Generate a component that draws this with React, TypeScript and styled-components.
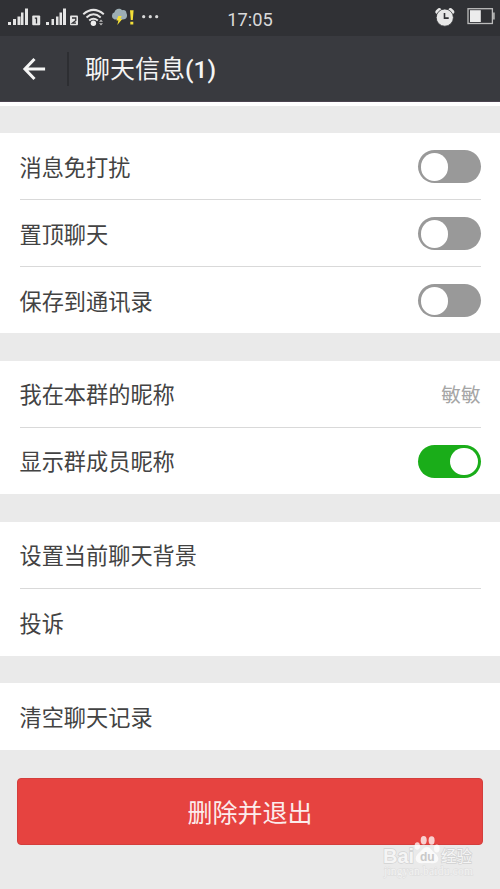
import React from "react";
import styled, { createGlobalStyle } from "styled-components";

const Global = createGlobalStyle`
  * { box-sizing: border-box; }
  body { margin: 0; background: #eaeaea; font-family: Roboto, "Noto Sans CJK SC", sans-serif; }
`;

const Screen = styled.main`
  position: relative;
  width: 500px;
  height: 889px;
  overflow: hidden;
  background: #eaeaea;
`;

const StatusBar = styled.div`
  height: 36px;
  display: grid;
  grid-template-columns: 200px 100px 200px;
  background: #303135;
  svg { display: block; }
`;

const Clock = styled.span`
  color: #d9d9da;
  text-align: center;
  font-size: 18.3px;
  line-height: 39px;
`;

const TitleBar = styled.header`
  height: 66px;
  display: flex;
  align-items: center;
  background: #393a3f;
  border-bottom: 1px solid #4b4450;
`;

const BackButton = styled.button`
  width: 67px;
  height: 65px;
  padding: 0 0 0 21px;
  border: 0;
  background: none;
  svg { display: block; }
`;

const Separator = styled.span`
  width: 2px;
  height: 34px;
  background: #2d2e32;
`;

const Title = styled.h1`
  margin: 3px 0 0 16px;
  font-size: 25px;
  line-height: 36px;
  font-weight: 400;
  color: #f4f4f4;
`;

const Count = styled.span`
  font-size: 24.5px;
  font-weight: 500;
`;

const TopStrip = styled.div`
  height: 4px;
  background: #fff;
`;

const Group = styled.section<{ $height: number }>`
  height: ${(p) => p.$height}px;
  margin-top: 27.5px;
  padding: 0 19.5px;
  background: #fff;
  display: flex;
  flex-direction: column;
  &:first-of-type { margin-top: 27px; }
`;

const Row = styled.div`
  flex: 1;
  min-height: 0;
  display: flex;
  align-items: center;
  justify-content: space-between;
  & + & { border-top: 1px solid #d9d9d9; }
`;

const Label = styled.span`
  padding-top: 3px;
  font-size: 22.2px;
  line-height: 34px;
  color: #434343;
`;

const Value = styled.span`
  padding-top: 4px;
  font-size: 19.6px;
  line-height: 30px;
  color: #a5a5a5;
`;

const Toggle = styled.span<{ $on?: boolean }>`
  display: flex;
  justify-content: ${(p) => (p.$on ? "flex-end" : "flex-start")};
  width: 63px;
  height: 33px;
  margin-top: 1px;
  padding: 3px;
  border-radius: 17px;
  background: ${(p) => (p.$on ? "#1aad19" : "#999")};
`;

const Knob = styled.span`
  width: 27.5px;
  height: 27.5px;
  border-radius: 50%;
  background: #fff;
`;

const DeleteButton = styled.button`
  display: block;
  width: 466px;
  height: 67px;
  margin: 28px 0 0 17px;
  padding: 0 0 1px;
  border: 1px solid #d43e3c;
  border-radius: 4px;
  background: #e64340;
  color: #fcecec;
  font-family: inherit;
  font-size: 25px;
`;

const Watermark = styled.svg`
  position: absolute;
  left: 378px;
  top: 830px;
`;

function Toggler({ on }: { on?: boolean }) {
  return (
    <Toggle $on={on} role="switch" aria-checked={!!on}>
      <Knob />
    </Toggle>
  );
}

function Signals() {
  return (
    <svg width="200" height="36" viewBox="0 0 200 36">
      <g fill="#e4e4e4">
        <path d="M8 22h3v3H8zM13 19h3v6h-3zM17.5 16.5h3V25h-3zM21 12.5h2.5V25H21zM25 8.5h3V25h-3z" />
        <path d="M46 22h3v3h-3zM51.5 19h2.5v6h-2.5zM56 16.5h2.5V25H56zM59.5 12.5H62V25h-2.5zM63 8.5h3V25h-3z" />
        <rect x="32.2" y="15.5" width="8" height="9.8" rx="1" />
        <rect x="70" y="15.5" width="8" height="9.8" rx="1" />
      </g>
      <path d="M34.8 18.2h1.7v5.2M72 18h3.8v2.4l-3.4 2.7H76" fill="none" stroke="#303135" strokeWidth="1.3" />
      <g fill="none" stroke="#e4e4e4" strokeWidth="2">
        <path d="M83.3 14.2Q93.5 5.5 103.8 14.2" />
        <path d="M86.5 17.4Q93.5 11.2 100.7 17.4" />
        <path d="M89.2 20.5Q93.5 17 97.8 20.5" />
      </g>
      <circle cx="93.4" cy="23.2" r="2.7" fill="#eee" />
      <path d="M99 21.8l2-2.2 2 2.2zM99 23.2l2 2.2 2-2.2z" fill="#bbb" />
      <path d="M114.5 19.5a3.8 3.8 0 0 1 0-7.2c.5-3.5 5.2-4.8 7.6-2.1 2.2-.8 4.4.7 4.3 2.8 1.8 3.7-.4 6.5-3.4 6.5z" fill="#9caeb5" />
      <path d="M118.3 16h3.4l-1.4 3h2l-5 6 1.1-4.6h-2z" fill="#f4df38" />
      <path d="M130 10.3h3.6l-.8 9.7h-2zM130.3 21.7h3v2.7h-3z" fill="#f4df38" />
      <g fill="#d8d8d8">
        <circle cx="143.7" cy="16.7" r="1.6" />
        <circle cx="150.3" cy="16.7" r="1.6" />
        <circle cx="156.7" cy="16.7" r="1.6" />
      </g>
    </svg>
  );
}

function AlarmAndBattery() {
  return (
    <svg width="200" height="36" viewBox="300 0 200 36">
      <g fill="#e7e7e7">
        <ellipse cx="438.3" cy="11" rx="3.4" ry="2.1" transform="rotate(-42 438.3 11)" />
        <ellipse cx="451.4" cy="11" rx="3.4" ry="2.1" transform="rotate(42 451.4 11)" />
        <circle cx="444.8" cy="17.6" r="8.6" stroke="#303135" strokeWidth="0.8" />
      </g>
      <path d="M444.5 13v5.1h4.2" fill="none" stroke="#303135" strokeWidth="1.6" />
      <rect x="468" y="8.7" width="24.4" height="14.8" fill="#303135" stroke="#bcbcbc" strokeWidth="1.3" />
      <rect x="470" y="10.2" width="10.8" height="11.8" fill="#ececec" />
      <path d="M493 12.5h1.8v7H493z" fill="#aaa" />
    </svg>
  );
}

export default function App() {
  return (
    <>
      <Global />
      <Screen>
        <StatusBar>
          <Signals />
          <Clock>17:05</Clock>
          <AlarmAndBattery />
        </StatusBar>
        <TitleBar>
          <BackButton aria-label="返回">
            <svg width="26" height="24" viewBox="0 0 26 24">
              <path d="M13.5 2 3.9 12l9.6 10M3.5 12h20.6" fill="none" stroke="#f5f5f5" strokeWidth="3" />
            </svg>
          </BackButton>
          <Separator />
          <Title>聊天信息<Count>(1)</Count></Title>
        </TitleBar>
        <TopStrip />
        <Group $height={200}>
          <Row><Label>消息免打扰</Label><Toggler /></Row>
          <Row><Label>置顶聊天</Label><Toggler /></Row>
          <Row><Label>保存到通讯录</Label><Toggler /></Row>
        </Group>
        <Group $height={133.5}>
          <Row><Label>我在本群的昵称</Label><Value>敏敏</Value></Row>
          <Row><Label>显示群成员昵称</Label><Toggler on /></Row>
        </Group>
        <Group $height={134}>
          <Row><Label>设置当前聊天背景</Label></Row>
          <Row><Label>投诉</Label></Row>
        </Group>
        <Group $height={66.5}>
          <Row><Label>清空聊天记录</Label></Row>
        </Group>
        <DeleteButton>删除并退出</DeleteButton>
        <Watermark width="110" height="54" viewBox="378 830 110 54">
          <g fill="#f5f5f5" stroke="#d2d2d2" strokeWidth="1.3" paintOrder="stroke">
            <text x="383" y="863" fontFamily="Liberation Sans, sans-serif" fontWeight="700" fontSize="20" textLength="31" lengthAdjust="spacingAndGlyphs">Bai</text>
            <text x="441" y="862" fontFamily="Noto Sans CJK SC, sans-serif" fontWeight="400" fontSize="15.5">经验</text>
          </g>
          <g fill="#fff" fillOpacity="0.75">
            <ellipse cx="417.3" cy="846" rx="2.7" ry="3.8" />
            <ellipse cx="423.7" cy="840.2" rx="3" ry="4.2" />
            <ellipse cx="431.6" cy="840.5" rx="3" ry="4.2" />
            <ellipse cx="436.8" cy="848.5" rx="2.8" ry="3.9" />
            <path d="M427 847c3.2 0 4.7 3.6 8 6.3 6.3 5.2 2.8 10.7-3 10-3-.4-7-.4-10 0-5.8.7-9-5.2-3.2-10.2 3.2-2.8 4.8-6.1 8.2-6.1z" />
          </g>
          <text x="420" y="861" fill="#c9c9c9" fontFamily="Liberation Sans, sans-serif" fontWeight="700" fontSize="12">du</text>
          <text x="384" y="875" fill="#f3f3f3" stroke="#dcdcdc" strokeWidth="0.9" paintOrder="stroke" fontFamily="Liberation Serif, serif" fontSize="11.5" textLength="89">jingyan.baidu.com</text>
        </Watermark>
      </Screen>
    </>
  );
}
